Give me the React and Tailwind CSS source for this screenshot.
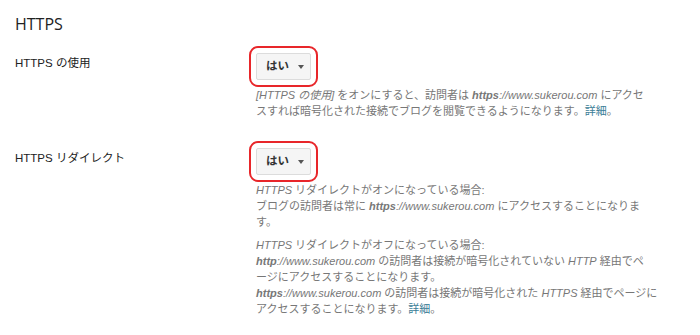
import React from "react";

const font = { fontFamily: '"Liberation Sans", Arial, "Noto Sans CJK JP", sans-serif' };

const SelectButton = () => (
  <button className="flex h-[27px] w-[55px] items-center justify-center gap-[9px] rounded-[2px] border border-[#dcdcdc] bg-[#f5f5f5] pl-[3px] text-[11.5px] font-bold text-[#333] outline-2 outline-[#e8262a] outline-offset-[5px] outline-solid">
    はい
    <span className="h-0 w-0 border-x-[3.5px] border-t-[4px] border-x-transparent border-t-[#555]" />
  </button>
);

const Row = ({ label, children }) => (
  <div className="flex">
    <div className="w-[241px] shrink-0 pt-[2px] text-[11.5px] text-[#222]">{label}</div>
    <div className="w-[398px]">
      <SelectButton />
      <div className="mt-[7px] text-[11px] leading-[16px] text-[#777]">{children}</div>
    </div>
  </div>
);

const Link = () => <a className="text-[#3a7d96]">詳細</a>;

export default function App() {
  return (
    <div className="h-[335px] w-[700px] overflow-hidden bg-white pl-[15px] pt-[13px]" style={font}>
      <h2 className="text-[16px] font-normal leading-[22px] text-[#222]" style={{ fontFamily: '"Open Sans", sans-serif' }}>
        HTTPS
      </h2>

      <div className="mt-[18px] flex flex-col gap-[29px]">
        <Row label="HTTPS の使用">
          <p>
            <i>[HTTPS の使用]</i> をオンにすると、訪問者は <b className="italic">https</b>
            <i>://www.sukerou.com</i> にアクセスすれば暗号化された接続でブログを閲覧できるようになります。<Link />。
          </p>
        </Row>

        <Row label="HTTPS リダイレクト">
          <p>
            <i>HTTPS</i> リダイレクトがオンになっている場合:
            <br />
            ブログの訪問者は常に <b className="italic">https</b>
            <i>://www.sukerou.com</i> にアクセスすることになります。
          </p>
          <p className="mt-[7px]">
            <i>HTTPS</i> リダイレクトがオフになっている場合:
            <br />
            <b className="italic">http</b>
            <i>://www.sukerou.com</i> の訪問者は接続が暗号化されていない <i>HTTP</i> 経由でページにアクセスすることになります。
            <br />
            <span className="whitespace-nowrap">
              <b className="italic">https</b>
              <i>://www.sukerou.com</i> の訪問者は接続が暗号化された <i>HTTPS</i> 経由でページに
            </span>
            <br />
            アクセスすることになります。<Link />。
          </p>
        </Row>
      </div>
    </div>
  );
}
